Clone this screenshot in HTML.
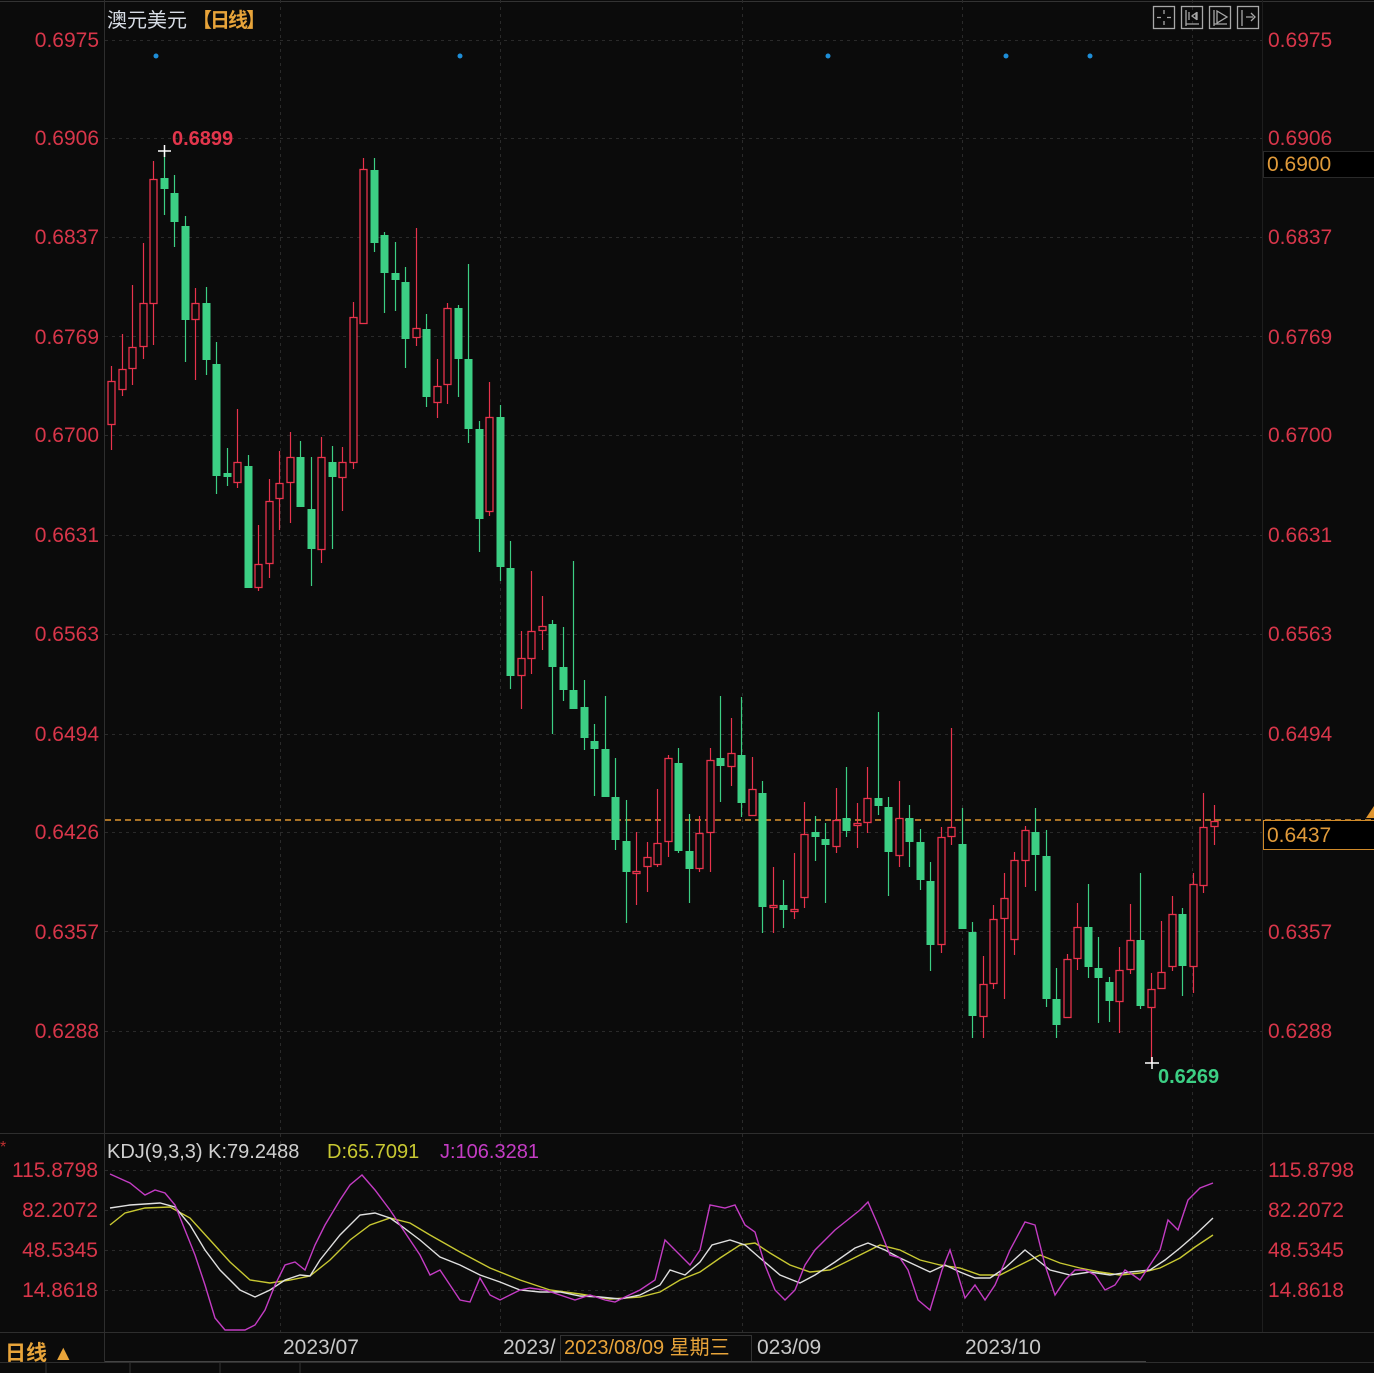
<!DOCTYPE html>
<html><head><meta charset="utf-8"><style>
html,body{margin:0;padding:0;background:#0b0b0b;}
body{width:1374px;height:1373px;overflow:hidden;position:relative;font-family:"Liberation Sans","Noto Sans CJK SC",sans-serif;}
svg{position:absolute;left:0;top:0;}
</style></head><body>
<svg id="s" width="1374" height="1373" xmlns="http://www.w3.org/2000/svg" font-family="Liberation Sans, Noto Sans CJK SC, sans-serif">
<rect width="1374" height="1373" fill="#0b0b0b"/>
<line x1="0" y1="1.5" x2="1374" y2="1.5" stroke="#333"/>
<line x1="104.5" y1="0" x2="104.5" y2="1362" stroke="#2e2e2e"/>
<line x1="1262.5" y1="0" x2="1262.5" y2="1332" stroke="#1e1e1e"/>
<line x1="0" y1="1133.5" x2="1374" y2="1133.5" stroke="#2e2e2e"/>
<line x1="0" y1="1332.5" x2="1374" y2="1332.5" stroke="#2e2e2e"/>
<line x1="0" y1="1362.5" x2="1374" y2="1362.5" stroke="#2e2e2e"/>
<g id="grid" stroke="#2a2a2a" stroke-dasharray="3,4"></g>
<g font-size="21" fill="#d8364a">
<text x="99" y="47" text-anchor="end">0.6975</text>
<text x="99" y="145" text-anchor="end">0.6906</text>
<text x="99" y="244" text-anchor="end">0.6837</text>
<text x="99" y="344" text-anchor="end">0.6769</text>
<text x="99" y="442" text-anchor="end">0.6700</text>
<text x="99" y="542" text-anchor="end">0.6631</text>
<text x="99" y="641" text-anchor="end">0.6563</text>
<text x="99" y="741" text-anchor="end">0.6494</text>
<text x="99" y="839" text-anchor="end">0.6426</text>
<text x="99" y="939" text-anchor="end">0.6357</text>
<text x="99" y="1038" text-anchor="end">0.6288</text>
<text x="1268" y="47">0.6975</text>
<text x="1268" y="145">0.6906</text>
<text x="1268" y="244">0.6837</text>
<text x="1268" y="344">0.6769</text>
<text x="1268" y="442">0.6700</text>
<text x="1268" y="542">0.6631</text>
<text x="1268" y="641">0.6563</text>
<text x="1268" y="741">0.6494</text>
<text x="1268" y="939">0.6357</text>
<text x="1268" y="1038">0.6288</text>
<text x="98" y="1177" text-anchor="end">115.8798</text>
<text x="98" y="1217" text-anchor="end">82.2072</text>
<text x="98" y="1257" text-anchor="end">48.5345</text>
<text x="98" y="1297" text-anchor="end">14.8618</text>
<text x="1268" y="1177">115.8798</text>
<text x="1268" y="1217">82.2072</text>
<text x="1268" y="1257">48.5345</text>
<text x="1268" y="1297">14.8618</text>
</g>
<rect x="1263.5" y="151.5" width="112" height="26" fill="#000" stroke="#2a2a2a"/>
<text x="1267" y="171" font-size="21" fill="#e09a3a">0.6900</text>
<line x1="105" y1="820" x2="1374" y2="820" stroke="#e0952e" stroke-width="1.5" stroke-dasharray="6,4"/>
<rect x="1263.5" y="820.5" width="112" height="29" fill="#000" stroke="#d08a2a"/>
<text x="1267" y="842" font-size="21" fill="#e09a3a">0.6437</text>
<path d="M1366 818 L1374 806 L1374 818 Z" fill="#e0952e"/>
<g fill="#1e8ed8"><circle cx="156" cy="56" r="2.5"/><circle cx="460" cy="56" r="2.5"/><circle cx="828" cy="56" r="2.5"/><circle cx="1006" cy="56" r="2.5"/><circle cx="1090" cy="56" r="2.5"/></g>
<g id="candles"></g>
<g stroke="#fff" stroke-width="1.5"><line x1="158" y1="151" x2="171" y2="151"/><line x1="164.5" y1="145" x2="164.5" y2="157"/><line x1="1145" y1="1063" x2="1159" y2="1063"/><line x1="1152" y1="1057" x2="1152" y2="1069"/></g>
<text x="172" y="145" font-size="20" font-weight="bold" fill="#e3364c">0.6899</text>
<text x="1158" y="1083" font-size="20" font-weight="bold" fill="#3ccf84">0.6269</text>
<text x="107" y="27" font-size="20" fill="#d8dde6">澳元美元</text>
<text x="192" y="27" font-size="20" fill="#e8a43a" font-weight="bold" letter-spacing="-2">【日线】</text>
<g stroke="#a8a8a8" fill="none" stroke-width="1.3">
<rect x="1153.5" y="6.5" width="21" height="22"/><rect x="1181.5" y="6.5" width="21" height="22"/><rect x="1209.5" y="6.5" width="21" height="22"/><rect x="1237.5" y="6.5" width="21" height="22"/>
<path d="M1164 10v4M1164 21v4M1157 17.5h4M1167 17.5h4"/>
<path d="M1186 10v16M1186 24h13M1189 12v8M1197 12v8M1192 16l4-3v6z"/>
<path d="M1214 10v16M1214 24h13M1217 11l10 6-10 6z"/>
<path d="M1242 10v16M1246 17h7M1251 13l4 4-4 4"/>
</g>
<g id="kdj" fill="none" stroke-width="1.4"></g>
<text x="107" y="1158" font-size="20" fill="#d0d0d0">KDJ(9,3,3) K:79.2488</text>
<text x="327" y="1158" font-size="20" fill="#c8c832">D:65.7091</text>
<text x="440" y="1158" font-size="20" fill="#c43cc4">J:106.3281</text>
<text x="0" y="1152" font-size="16" fill="#c03030">*</text>
<g font-size="21" fill="#c8c8c8">
<text x="283" y="1354">2023/07</text>
<text x="503" y="1354">2023/</text>
<text x="757" y="1354">023/09</text>
<text x="965" y="1354">2023/10</text>
</g>
<rect x="560.5" y="1335.5" width="191" height="26" fill="#0b0b0b" stroke="#333"/>
<text x="564" y="1354" font-size="20" fill="#e8a43a">2023/08/09 星期三</text>
<line x1="105" y1="1361.5" x2="1146" y2="1361.5" stroke="#444"/>
<text x="5" y="1360" font-size="21" font-weight="bold" fill="#e8a43a">日线 ▲</text>
<g stroke="#333"><line x1="46" y1="1363" x2="46" y2="1373"/><line x1="130" y1="1363" x2="130" y2="1373"/><line x1="220" y1="1363" x2="220" y2="1373"/><line x1="300" y1="1363" x2="300" y2="1373"/></g>
</svg>
<script>
var NS="http://www.w3.org/2000/svg";
function el(t,a,p){var e=document.createElementNS(NS,t);for(var k in a)e.setAttribute(k,a[k]);p.appendChild(e);return e;}
var g=document.getElementById('grid');
[40,138,237,336,435,535,634,734,832,931,1031,1170,1210,1250,1290].forEach(function(y){el('line',{x1:105,y1:y+.5,x2:1262,y2:y+.5},g);});
[280,500,742,962,1192].forEach(function(x){el('line',{x1:x+.5,y1:0,x2:x+.5,y2:1332},g);});
var C=[
['r',381,424,366,450],['r',369,389,334,396],['r',347,368,285,385],['r',303,346,243,359],['r',179,303,161,345],
['g',178,189,151,215],['g',193,222,175,247],['g',226,320,216,362],['r',303,319,288,380],['g',303,360,287,375],
['g',364,476,342,494],['g',473,477,448,486],['r',462,482,409,488],['g',466,588,455,588],['r',564,587,525,591],
['r',501,563,479,578],['r',483,498,451,530],['r',457,482,432,523],['g',457,507,441,507],['g',509,549,457,586],
['r',457,549,437,563],['g',462,477,446,549],['r',462,477,447,511],['r',317,462,302,469],['r',169,323,158,323],
['g',170,243,158,252],['g',235,273,232,313],['g',273,280,242,311],['g',282,339,267,368],['r',328,337,228,346],
['g',329,397,314,407],['r',386,402,359,418],['r',308,384,303,404],['g',308,359,305,397],['g',359,429,264,443],
['g',429,519,421,552],['r',417,511,382,516],['g',417,567,405,581],['g',568,676,541,689],['r',658,675,631,709],
['r',631,658,571,674],['r',626,630,596,650],['g',624,667,620,734],['g',667,690,627,701],['g',690,709,561,709],
['g',707,738,680,750],['g',741,749,724,796],
['g',749,797,696,797],['g',797,840,758,850],['g',841,872,800,923],['r',871,873,832,905],['r',857,866,842,892],
['r',843,864,789,867],['r',758,841,755,857],['g',763,851,748,853],['g',851,869,814,903],['r',833,868,816,872],
['r',760,832,748,872],['g',758,766,696,802],['r',753,766,718,786],['g',755,803,697,817],['r',789,815,757,815],
['g',793,907,781,933],['r',905,907,867,933],['g',905,910,880,928],['r',909,911,853,919],['r',834,897,802,908],
['g',832,837,816,861],['g',839,845,823,903],['r',820,846,788,853],['g',818,831,767,837],['r',823,825,803,848],
['r',798,822,767,833],['g',798,806,712,815],['g',807,852,797,896],['r',818,855,781,867],['g',818,842,805,867],
['g',842,880,829,890],['g',881,945,862,971],['r',837,944,827,953],['r',827,836,728,845],['g',844,929,808,929],
['g',932,1016,922,1038],['r',984,1016,956,1038],['r',919,983,905,989],['r',898,918,873,999],['r',860,939,852,955],
['r',830,860,826,887],['g',832,855,808,891],['g',856,999,830,1007],['g',999,1025,968,1038],['r',959,1017,954,1017],
['r',927,958,903,970],['g',927,967,884,978],['g',968,978,937,1023],['g',982,1001,977,1022],['r',970,1001,947,1033],
['r',940,969,904,974],['g',940,1006,873,1009],['r',989,1007,973,1063],['r',972,988,921,989],['r',914,966,896,971],
['g',914,966,908,996],['r',884,966,873,993],['r',827,885,793,893],['r',821,826,805,845]];
var cg=document.getElementById('candles');
var R='#e8334c',G='#3ccf84';
C.forEach(function(c,i){
 var x=Math.round(111+10.5*i);var col=c[0]=='r'?R:G;
 var t=c[1],b=c[2];if(b-t<2)b=t+2;
 el('line',{x1:x+.5,y1:c[3],x2:x+.5,y2:t,stroke:col,'stroke-width':1.2},cg);
 el('line',{x1:x+.5,y1:b,x2:x+.5,y2:c[4],stroke:col,'stroke-width':1.2},cg);
 if(c[0]=='r')el('rect',{x:x-3,y:t+.5,width:7,height:b-t,fill:'#0b0b0b',stroke:col,'stroke-width':1.3},cg);
 else el('rect',{x:x-3.5,y:t,width:8,height:b-t,fill:col},cg);
});
var kg=document.getElementById('kdj');
var J=[[110,1174],[130,1183],[145,1195],[155,1190],[165,1193],[175,1205],[185,1230],[195,1255],[205,1285],[215,1318],[225,1330],[245,1330],[255,1325],[265,1310],[275,1285],[285,1265],[295,1262],[305,1270],[315,1245],[325,1225],[340,1200],[350,1185],[362,1175],[375,1190],[390,1210],[400,1225],[410,1240],[420,1255],[430,1275],[440,1270],[450,1285],[460,1300],[470,1302],[480,1278],[490,1295],[500,1300],[510,1295],[520,1290],[530,1288],[545,1290],[560,1295],[575,1300],[590,1295],[605,1300],[615,1302],[625,1297],[640,1290],[655,1280],[665,1240],[680,1255],[690,1265],[700,1250],[710,1205],[725,1208],[735,1205],[745,1225],[755,1232],[765,1265],[775,1290],[785,1300],[795,1290],[805,1265],[815,1250],[825,1240],[835,1230],[845,1222],[860,1210],[868,1202],[878,1225],[890,1255],[900,1258],[908,1270],[918,1300],[930,1310],[942,1270],[950,1250],[958,1275],[965,1298],[975,1285],[985,1300],[995,1285],[1010,1250],[1025,1222],[1035,1225],[1045,1265],[1055,1295],[1065,1280],[1075,1270],[1085,1270],[1095,1275],[1105,1290],[1115,1285],[1125,1270],[1133,1275],[1140,1280],[1150,1265],[1160,1250],[1168,1220],[1178,1230],[1188,1200],[1200,1188],[1213,1183]];
var K=[[110,1208],[130,1205],[160,1203],[175,1207],[190,1225],[205,1250],[220,1270],[240,1290],[255,1297],[270,1290],[285,1280],[300,1275],[310,1276],[320,1260],[340,1235],[360,1215],[375,1213],[390,1218],[400,1225],[420,1240],[440,1257],[460,1265],[480,1275],[500,1282],[520,1290],[540,1292],[560,1292],[580,1296],[600,1297],[620,1299],[640,1295],[660,1285],[670,1270],[685,1275],[700,1262],[712,1245],[730,1240],[745,1245],[760,1258],[780,1275],[800,1283],[815,1275],[835,1262],[855,1248],[868,1243],[885,1250],[900,1258],[915,1265],[930,1272],[945,1265],[960,1272],[975,1278],[990,1278],[1005,1268],[1025,1250],[1035,1258],[1050,1270],[1070,1275],[1090,1272],[1110,1275],[1130,1272],[1150,1270],[1165,1260],[1180,1248],[1195,1235],[1213,1218]];
var D=[[110,1225],[125,1213],[145,1208],[170,1207],[190,1218],[210,1240],[230,1262],[250,1280],[270,1283],[290,1280],[310,1276],[330,1260],[350,1240],[370,1225],[390,1218],[410,1223],[430,1235],[460,1252],[490,1268],[520,1280],[550,1290],[580,1294],[610,1299],[640,1297],[660,1292],[680,1280],[700,1272],[720,1258],[740,1245],[755,1243],[770,1253],[790,1265],[810,1272],[830,1270],[860,1255],[880,1245],[900,1250],[920,1260],[940,1265],[960,1268],[980,1275],[1000,1275],[1020,1265],[1040,1255],[1060,1263],[1080,1268],[1100,1272],[1120,1275],[1140,1273],[1160,1268],[1180,1258],[1195,1247],[1213,1235]];
function pl(a,c){el('polyline',{points:a.map(function(p){return p.join(',')}).join(' '),stroke:c},kg);}
pl(D,'#c8c832');pl(K,'#e0e0e0');pl(J,'#c43cc4');
</script>
</body></html>
